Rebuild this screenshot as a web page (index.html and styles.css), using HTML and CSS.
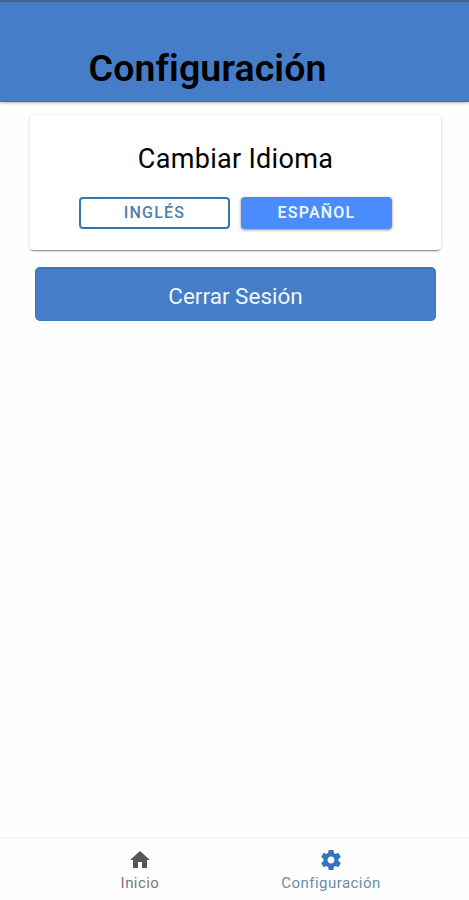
FILE: index.html
```html
<!DOCTYPE html>
<html lang="es">
<head>
<meta charset="utf-8">
<title>Configuración</title>
<link rel="stylesheet" href="styles.css">
</head>
<body>
<header class="header"><h1 class="title">Configuración</h1></header>
<main class="content">
  <section class="card">
    <h2 class="card-title">Cambiar Idioma</h2>
    <div class="languages">
      <button class="lang outline">INGLÉS</button>
      <button class="lang solid">ESPAÑOL</button>
    </div>
  </section>
  <button class="logout">Cerrar Sesión</button>
</main>
<nav class="tabs">
  <a class="tab">
    <svg class="icon" viewBox="0 0 24 24"><path d="M10 20v-6h4v6h5v-8h3L12 3 2 12h3v8z"/></svg>
    <span class="home-label">Inicio</span>
  </a>
  <a class="tab active">
    <svg class="icon" viewBox="0 0 24 24"><path d="M19.43 12.98c.04-.32.07-.64.07-.98s-.03-.66-.07-.98l2.11-1.65c.19-.15.24-.42.12-.64l-2-3.46c-.12-.22-.39-.3-.61-.22l-2.49 1c-.52-.4-1.08-.73-1.69-.98l-.38-2.65C14.46 2.18 14.25 2 14 2h-4c-.25 0-.46.18-.49.42l-.38 2.65c-.61.25-1.17.59-1.69.98l-2.49-1c-.23-.09-.49 0-.61.22l-2 3.46c-.13.22-.07.49.12.64l2.11 1.65c-.04.32-.07.65-.07.98s.03.66.07.98l-2.11 1.65c-.19.15-.24.42-.12.64l2 3.46c.12.22.39.3.61.22l2.49-1c.52.4 1.08.73 1.69.98l.38 2.65c.03.24.24.42.49.42h4c.25 0 .46-.18.49-.42l.38-2.65c.61-.25 1.17-.59 1.69-.98l2.49 1c.23.09.49 0 .61-.22l2-3.46c.12-.22.07-.49-.12-.64l-2.11-1.65zM12 15.5c-1.93 0-3.5-1.57-3.5-3.5s1.57-3.5 3.5-3.5 3.5 1.57 3.5 3.5-1.57 3.5-3.5 3.5z"/></svg>
    <span>Configuración</span>
  </a>
</nav>
</body>
</html>
```
FILE: styles.css
```css
* { box-sizing: border-box; }
body {
  margin: 0;
  height: 900px;
  display: flex;
  flex-direction: column;
  background: #fefefe;
  font-family: Roboto, sans-serif;
  overflow: hidden;
}
button { font-family: inherit; margin: 0; padding: 0; }
.header {
  height: 102px;
  padding: 44px 0 0 88.5px;
  background: #457dc8;
  border-top: 2px solid #46618f;
  border-bottom: 1px solid #3671ba;
  box-shadow: 0 1px 3px rgba(0, 0, 0, .3);
}
.title {
  margin: 0;
  font-size: 37.5px;
  line-height: 44px;
  font-weight: 600;
  letter-spacing: .13px;
  color: #000;
}
.content {
  flex: 1;
  display: flex;
  flex-direction: column;
  padding: 13px 28px 0 30px;
}
.card {
  height: 135px;
  padding-top: 27px;
  border-radius: 4px;
  background: #fff;
  box-shadow: 0 2px 1px -1px rgba(0, 0, 0, .34), 0 1px 3px rgba(0, 0, 0, .22);
}
.card-title {
  margin: 0;
  text-align: center;
  font-size: 27px;
  line-height: 34px;
  font-weight: 400;
  letter-spacing: .3px;
  color: #000;
}
.languages {
  display: flex;
  gap: 11px;
  margin: 21px 0 0 49px;
}
.lang {
  width: 151px;
  height: 32px;
  border-radius: 4px;
  font-size: 16px;
  line-height: 28px;
  letter-spacing: 1.2px;
}
.outline {
  background: #fff;
  border: 2px solid #3976ad;
  color: #5080ae;
  font-weight: 500;
}
.solid {
  background: #4a8bfd;
  border: 0;
  color: #e9f4ff;
  font-weight: 600;
  box-shadow: 0 1px 3px rgba(0, 0, 0, .45);
}
.logout {
  height: 54px;
  margin: 17px 5px 0;
  border: 1px solid #3878b9;
  border-top-width: 2px;
  border-radius: 5px;
  background: #457dc8;
  color: #edf7ff;
  font-size: 22.5px;
  padding-top: 3px;
}
.tabs {
  height: 63px;
  display: flex;
  justify-content: center;
  padding-left: 2px;
  border-top: 2px solid #f7f7f7;
}
.tab {
  width: 191px;
  padding-top: 9px;
  display: flex;
  flex-direction: column;
  align-items: center;
  font-size: 15px;
  line-height: 20px;
  letter-spacing: .45px;
  color: #777;
}
.icon {
  width: 24px;
  height: 24px;
  margin-bottom: 1px;
  fill: #575757;
}
.active { color: #698da7; }
.active .icon { fill: #3474be; }
```
